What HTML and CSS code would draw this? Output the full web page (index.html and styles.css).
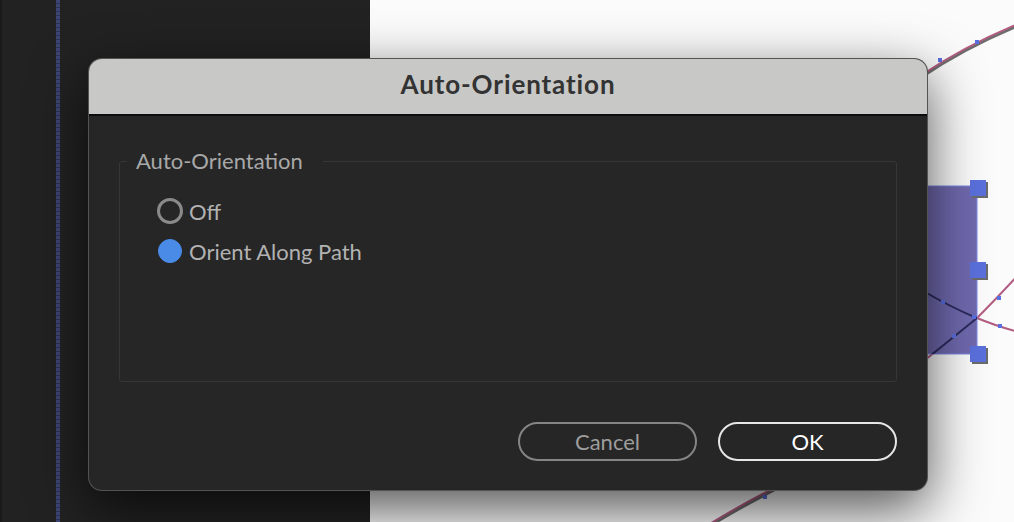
FILE: index.html
```html
<!DOCTYPE html>
<html lang="en">
<head>
  <meta charset="UTF-8">
  <title>Auto-Orientation</title>
  <link rel="stylesheet" href="styles.css">
</head>
<body>
<div class="app">
  <div class="sidebar">
    <div class="guide"></div>
  </div>
  <div class="canvas">
    <svg class="stage" width="644" height="522" viewBox="0 0 644 522">
      <defs>
        <clipPath id="layer-clip"><rect x="520" y="186" width="87" height="168"/></clipPath>
      </defs>
      <!-- motion paths -->
      <g fill="none" stroke-linecap="round">
        <path d="M550 78 Q596 47 650 25" stroke="#6d6d6d" stroke-width="3"/>
        <path d="M550 76 Q596 45 650 23" stroke="#b35c82" stroke-width="2"/>
        <path d="M330 532 Q368 508 412 486" stroke="#6d6d6d" stroke-width="3"/>
        <path d="M330 530 Q368 506 412 484" stroke="#b35c82" stroke-width="2"/>
        <path d="M540 372 Q590 332 607 318 Q625 300 650 273" stroke="#b35c82" stroke-width="2"/>
        <path d="M548 288 Q582 308 607 318 Q626 326 652 333" stroke="#b35c82" stroke-width="2"/>
      </g>
      <!-- layer -->
      <rect x="520" y="186" width="87" height="168" fill="#6862ab" fill-opacity=".95" stroke="#7d86e6" stroke-width="1"/>
      <g fill="none" stroke="#2a2c5e" stroke-width="2" clip-path="url(#layer-clip)">
        <path d="M540 372 Q590 332 607 318"/>
        <path d="M548 288 Q582 308 607 318"/>
      </g>
      <g fill="#5a6fe0">
        <rect x="568" y="58" width="4" height="4"/>
        <rect x="605" y="40" width="4" height="4"/>
        <rect x="393" y="495" width="4" height="4"/>
        <rect x="627" y="296" width="4" height="4"/>
        <rect x="628" y="324" width="4" height="4"/>
        <rect x="582" y="334" width="4" height="4"/>
        <rect x="571" y="300" width="4" height="4"/>
        <rect x="602" y="315" width="4" height="4"/>
      </g>
      <!-- handles -->
      <g fill="#6b6b6b">
        <rect x="602" y="182" width="16" height="16"/>
        <rect x="602" y="264" width="16" height="16"/>
        <rect x="602" y="348" width="16" height="16"/>
      </g>
      <g fill="#5b70dc">
        <rect x="600" y="180" width="16" height="16"/>
        <rect x="600" y="262" width="16" height="16"/>
        <rect x="600" y="346" width="16" height="16"/>
      </g>
    </svg>
  </div>

  <div class="dialog">
    <div class="dialog-title">Auto-Orientation</div>
    <div class="dialog-body">
      <fieldset class="group">
        <legend>Auto-Orientation</legend>
        <label class="radio"><span class="dot"></span>Off</label>
        <label class="radio is-checked"><span class="dot"></span>Orient Along Path</label>
      </fieldset>
      <div class="actions">
        <button class="btn">Cancel</button>
        <button class="btn btn-primary">OK</button>
      </div>
    </div>
  </div>
</div>
</body>
</html>
```

FILE: styles.css
```css
*{ margin: 0; padding: 0; box-sizing: border-box;}
body{ font-family: Lato, "Noto Sans", "Liberation Sans", sans-serif; background: #222;}
.app{ width: 100%; height: 100vh; display: flex; position: relative; overflow: hidden;}

.sidebar{ width: 370px; background: #222222; border-left: 2px solid #1a1a1a; padding-left: 54px;}
.sidebar .guide{ width: 4px; height: 100%; background: repeating-linear-gradient(to bottom, #3d4575 0, #3d4575 3px, #2c3150 3px, #2c3150 4px);}

.canvas{ flex: 1; position: relative; background: #fbfbfb;}
.canvas .stage{ position: absolute; left: 0; top: 0;}

.dialog{ position: absolute; left: 88px; top: 58px; width: 840px; height: 433px; border-radius: 14px; overflow: hidden; background: #262626; display: flex; flex-direction: column; border: 1px solid rgba(140,140,140,.45); box-shadow: 0 18px 55px rgba(0,0,0,.68);}
.dialog-title{ height: 57px; background: #c8c8c6; border-bottom: 2px solid #0c0c0c; color: #333; font-size: 26px; font-weight: 700; letter-spacing: .9px; text-align: center; line-height: 50px;}
.dialog-body{ flex: 1; display: flex; flex-direction: column; padding: 32px 30px 29px;}

.group{ height: 234px; border: 1px solid #363636; border-radius: 3px; padding: 0 0 0 7px;}
.group legend{ color: #a8a8a8; font-size: 22px; padding: 0 20px 0 9px; line-height: 26px;}
.radio{ display: flex; align-items: center; height: 40px; color: #b2b2b2; font-size: 22px; padding-left: 30px;}
.radio:first-of-type{ margin-top: 17px;}
.radio .dot{ width: 26px; height: 26px; border-radius: 50%; border: 3px solid #8a8a8a; margin-right: 6px;}
.radio.is-checked .dot{ border: 1px solid #4a8be8; background: #4a8be8; width: 24px; height: 24px; margin: 0 7px 0 1px;}

.actions{ display: flex; justify-content: flex-end; gap: 21px; margin-top: auto;}
.btn{ width: 179px; height: 39px; border-radius: 20px; background: transparent; border: 2px solid #858585; color: #9d9d9d; font-family: inherit; font-size: 22px;}
.btn-primary{ border-color: #e6e6e6; color: #fff;}
```
